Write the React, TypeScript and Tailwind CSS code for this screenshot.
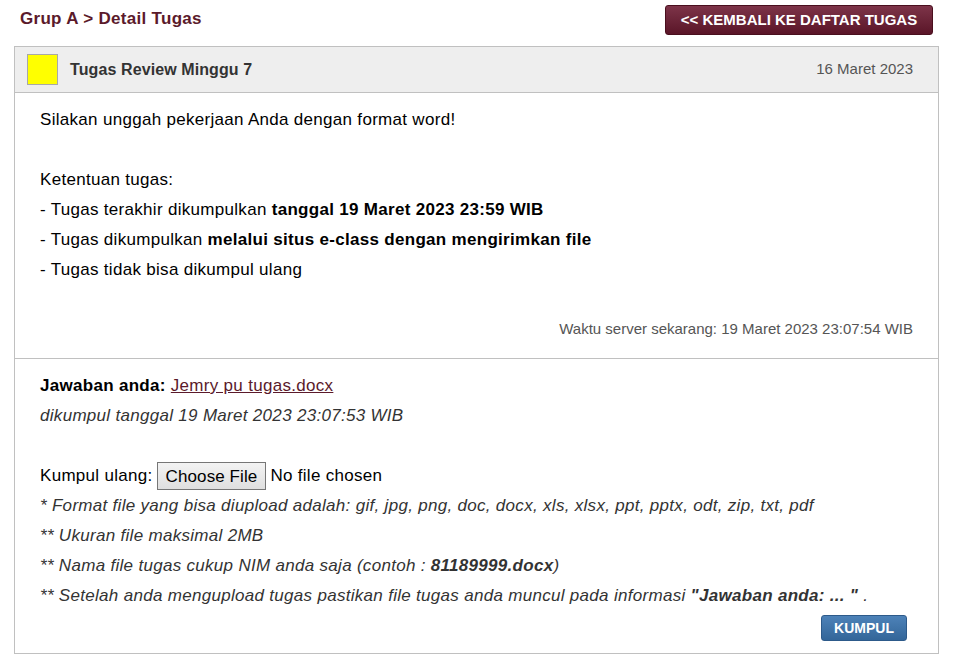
export default function App() {
  return (
    <div className="min-h-screen bg-white px-[14px] font-['Liberation_Sans',Arial,sans-serif] text-black">
      <div className="w-[925px]">
        <div className="flex items-start justify-between px-[6px] pt-[5px]">
          <h1 className="pt-[4px] text-[17px] font-bold leading-[20px] tracking-[0.3px] text-[#5b1a2b]">
            Grup A &gt; Detail Tugas
          </h1>
          <button className="h-[30px] w-[268px] shrink-0 rounded-[3px] border border-[#4a0f1e] bg-gradient-to-b from-[#7d3449] to-[#5a1528] text-[15px] font-bold text-white">
            &lt;&lt; KEMBALI KE DAFTAR TUGAS
          </button>
        </div>

        <div className="mt-[11px] border border-[#c0c0c0]">
          <div className="flex h-[46px] items-center border-b border-[#c0c0c0] bg-[#eeeeee] pl-[12px] pr-[25px]">
            <div className="h-[31px] w-[31px] border border-[#a8a8a8] bg-[#ffff00]" />
            <div className="ml-[12px] text-[16px] font-bold tracking-[0.1px] text-[#333]">Tugas Review Minggu 7</div>
            <div className="ml-auto text-[15px] text-[#555]">16 Maret 2023</div>
          </div>

          <div className="border-b border-[#c0c0c0] px-[25px] pb-[14px] pt-[12px]">
            <div className="text-[17px] leading-[30px] tracking-[0.3px]">
              <div>Silakan unggah pekerjaan Anda dengan format word!</div>
              <div>&nbsp;</div>
              <div>Ketentuan tugas:</div>
              <div>
                - Tugas terakhir dikumpulkan <b>tanggal 19 Maret 2023 23:59 WIB</b>
              </div>
              <div>
                - Tugas dikumpulkan <b>melalui situs e-class dengan mengirimkan file</b>
              </div>
              <div>- Tugas tidak bisa dikumpul ulang</div>
            </div>
            <div className="mt-[29px] text-right text-[15px] leading-[30px] text-[#555]">
              Waktu server sekarang: 19 Maret 2023 23:07:54 WIB
            </div>
          </div>

          <div className="px-[25px] pb-[12px] pt-[12px] text-[17px] leading-[30px] tracking-[0.3px]">
            <div>
              <b>Jawaban anda:</b>{" "}
              <a href="#" className="text-[#5b1a2b] underline">
                Jemry pu tugas.docx
              </a>
            </div>
            <div className="italic text-[#333]">dikumpul tanggal 19 Maret 2023 23:07:53 WIB</div>
            <div>&nbsp;</div>
            <div className="flex items-center">
              <span>Kumpul ulang:</span>
              <span className="ml-[4px] inline-flex h-[28px] items-center border border-[#767676] bg-gradient-to-b from-[#f3f3f3] to-[#dfdfdf] px-[8px] leading-none tracking-[0.1px]">
                Choose File
              </span>
              <span className="ml-[4px]">No file chosen</span>
            </div>
            <div className="italic text-[#333]">
              <div>* Format file yang bisa diupload adalah: gif, jpg, png, doc, docx, xls, xlsx, ppt, pptx, odt, zip, txt, pdf</div>
              <div>** Ukuran file maksimal 2MB</div>
              <div>
                ** Nama file tugas cukup NIM anda saja (contoh : <b>81189999.docx</b>)
              </div>
              <div>
                ** Setelah anda mengupload tugas pastikan file tugas anda muncul pada informasi{" "}
                <b>"Jawaban anda: ... "</b> .
              </div>
            </div>
            <div className="mt-[4px] flex justify-end pr-[6px]">
              <button className="h-[26px] w-[86px] rounded-[3px] border border-[#2d5a8a] bg-gradient-to-b from-[#4d82b8] to-[#336699] text-[14px] font-bold leading-none tracking-normal text-white">
                KUMPUL
              </button>
            </div>
          </div>
        </div>
      </div>
    </div>
  );
}
